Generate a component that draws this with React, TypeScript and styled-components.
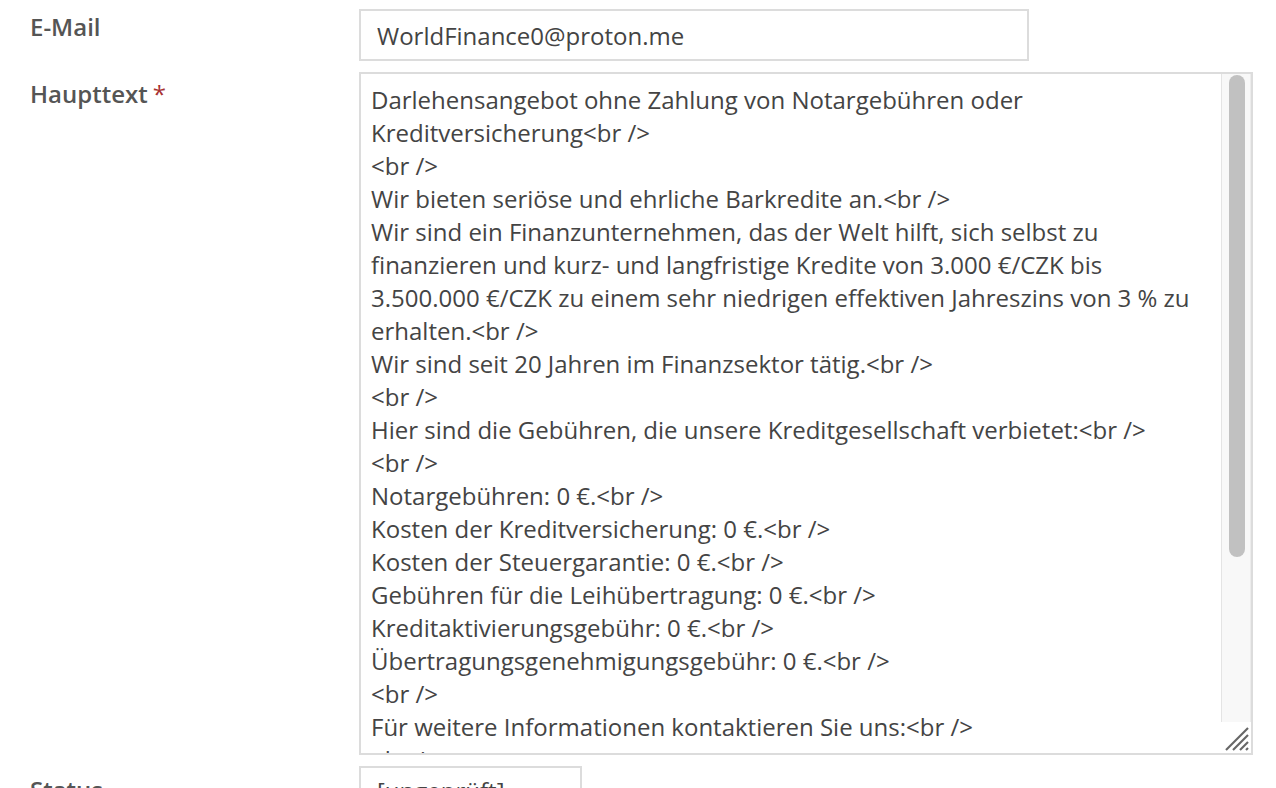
import { FC } from 'react';
import styled, { createGlobalStyle } from 'styled-components';

const MESSAGE = [
  'Darlehensangebot ohne Zahlung von Notargebühren oder Kreditversicherung<br />',
  '<br />',
  'Wir bieten seriöse und ehrliche Barkredite an.<br />',
  'Wir sind ein Finanzunternehmen, das der Welt hilft, sich selbst zu finanzieren und kurz- und langfristige Kredite von 3.000 €/CZK bis 3.500.000 €/CZK zu einem sehr niedrigen effektiven Jahreszins von 3 % zu erhalten.<br />',
  'Wir sind seit 20 Jahren im Finanzsektor tätig.<br />',
  '<br />',
  'Hier sind die Gebühren, die unsere Kreditgesellschaft verbietet:<br />',
  '<br />',
  'Notargebühren: 0 €.<br />',
  'Kosten der Kreditversicherung: 0 €.<br />',
  'Kosten der Steuergarantie: 0 €.<br />',
  'Gebühren für die Leihübertragung: 0 €.<br />',
  'Kreditaktivierungsgebühr: 0 €.<br />',
  'Übertragungsgenehmigungsgebühr: 0 €.<br />',
  '<br />',
  'Für weitere Informationen kontaktieren Sie uns:<br />',
  '<br />',
  'E-Mail: WorldFinance0@proton.me<br />',
  '<br />',
  'Wir antworten Ihnen innerhalb von 24 Stunden.<br />',
  '<br />',
  'Mit freundlichen Grüßen<br />',
  'World Finance<br />',
].join('\n');

const GlobalStyle = createGlobalStyle`
  html, body {
    margin: 0;
    padding: 0;
    background: #fff;
    overflow: hidden;
  }
  body {
    font-family: 'Open Sans', 'Noto Sans', sans-serif;
    color: #444;
  }
`;

const Form = styled.div`
  display: flex;
  flex-direction: column;
  gap: 11px;
  padding-top: 9px;
  height: 788px;
  box-sizing: border-box;
`;

const Row = styled.div`
  display: grid;
  grid-template-columns: 359px 1fr;
  align-items: start;
`;

const Label = styled.label<{ $offset: number }>`
  padding-left: 30px;
  padding-top: ${({ $offset }) => $offset}px;
  font-size: 24px;
  line-height: 33px;
  font-weight: 600;
  color: #555;
`;

const Required = styled.span`
  color: #a83232;
  font-weight: 400;
  margin-left: 5px;
`;

const TextInput = styled.input`
  box-sizing: border-box;
  width: 670px;
  height: 52px;
  border: 2px solid #dcdcdc;
  border-radius: 0;
  padding: 0 16px;
  font-family: 'Open Sans', 'Noto Sans', sans-serif;
  font-size: 24px;
  color: #444;
  background: #fff;
  outline: none;
`;

const TextBox = styled.div`
  box-sizing: border-box;
  display: flex;
  width: 894px;
  height: 683px;
  border: 2px solid #dcdcdc;
  background: #fff;
`;

const TextArea = styled.textarea`
  flex: 1;
  box-sizing: border-box;
  min-width: 0;
  border: none;
  padding: 9px 20px 11px 10px;
  font-family: 'Open Sans', 'Noto Sans', sans-serif;
  font-size: 24px;
  line-height: 33px;
  color: #444;
  background: transparent;
  outline: none;
  resize: none;
  overflow: hidden;
`;

const ScrollColumn = styled.div`
  width: 30px;
  display: flex;
  flex-direction: column;
`;

const Track = styled.div`
  flex: 1;
  box-sizing: border-box;
  background: #f8f8f8;
  border-left: 1px solid #e4e4e4;
  border-right: 1px solid #ececec;
  padding: 1px 5px 0 7px;
`;

const Thumb = styled.div`
  height: 482px;
  border-radius: 8px;
  background: #c1c1c1;
`;

const Corner = styled.div`
  height: 30px;
  display: flex;
  align-items: flex-end;
  justify-content: flex-end;
  padding: 0 1px 1px 0;
`;

const Select = styled.div`
  box-sizing: border-box;
  width: 223px;
  height: 52px;
  border: 2px solid #dcdcdc;
  padding: 6px 16px;
  font-size: 24px;
  line-height: 33px;
  color: #444;
`;

const Grip: FC = () => (
  <svg width="26" height="26" viewBox="0 0 26 26">
    <g stroke="#666" strokeWidth="2.2" strokeLinecap="butt">
      <line x1="2" y1="24" x2="24" y2="2" />
      <line x1="9" y1="24" x2="24" y2="9" />
      <line x1="16" y1="24" x2="24" y2="16" />
      <line x1="22" y1="24" x2="24" y2="22" />
    </g>
  </svg>
);

const App: FC = () => (
  <>
    <GlobalStyle />
    <Form>
      <Row>
        <Label $offset={1}>E-Mail</Label>
        <TextInput type="email" defaultValue="WorldFinance0@proton.me" />
      </Row>
      <Row>
        <Label $offset={5}>
          Haupttext<Required>*</Required>
        </Label>
        <TextBox>
          <TextArea defaultValue={MESSAGE} spellCheck={false} />
          <ScrollColumn>
            <Track>
              <Thumb />
            </Track>
            <Corner>
              <Grip />
            </Corner>
          </ScrollColumn>
        </TextBox>
      </Row>
      <Row>
        <Label $offset={7}>Status</Label>
        <Select>[ungeprüft]</Select>
      </Row>
    </Form>
  </>
);

export default App;
